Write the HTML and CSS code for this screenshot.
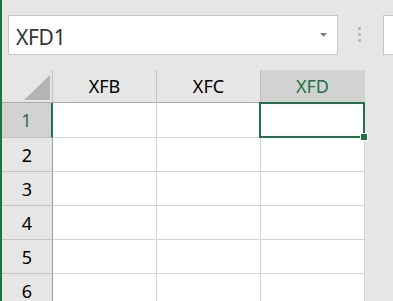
FILE: index.html
```html
<!DOCTYPE html>
<html lang="en">
<head>
<meta charset="utf-8">
<title>Sheet</title>
<link rel="stylesheet" href="styles.css">
</head>
<body>
<div class="app">
  <div class="toolbar">
    <div class="namebox">
      <span class="name">XFD1</span>
      <svg class="arrow" width="7" height="4" viewBox="0 0 7 4"><polygon points="0,0 7,0 3.5,4" fill="#808080"/></svg>
    </div>
    <div class="dots"><span></span><span></span><span></span></div>
    <div class="formula"></div>
  </div>
  <div class="sheet">
    <div class="corner"><svg width="26" height="25" viewBox="0 0 26 25"><polygon points="0,25 26,25 26,0" fill="#b4b4b4"/></svg></div>
    <div class="colhead">XFB</div>
    <div class="colhead">XFC</div>
    <div class="colhead sel">XFD</div>

    <div class="rowhead sel">1</div><div class="cell"></div><div class="cell"></div><div class="cell"></div>
    <div class="rowhead">2</div><div class="cell"></div><div class="cell"></div><div class="cell"></div>
    <div class="rowhead">3</div><div class="cell"></div><div class="cell"></div><div class="cell"></div>
    <div class="rowhead">4</div><div class="cell"></div><div class="cell"></div><div class="cell"></div>
    <div class="rowhead">5</div><div class="cell"></div><div class="cell"></div><div class="cell"></div>
    <div class="rowhead">6</div><div class="cell"></div><div class="cell"></div><div class="cell"></div>

    <div class="selection"><span class="handle"></span></div>
  </div>
</div>
</body>
</html>
```

FILE: styles.css
```css
html, body {
  margin: 0;
  padding: 0;
}
body {
  background: #e6e6e6;
  font-family: "Noto Sans", "Open Sans", sans-serif;
  overflow: hidden;
}
.app {
  height: 301px;
  border-left: 2px solid #217346;
  overflow: hidden;
}
.toolbar {
  display: flex;
  align-items: flex-start;
  height: 70px;
  box-sizing: border-box;
  padding: 15px 0 0 6px;
  overflow: hidden;
}
.toolbar > * {
  flex-shrink: 0;
}
.namebox {
  box-sizing: border-box;
  width: 330px;
  height: 40px;
  border: 1px solid #c6c6c6;
  background: #fff;
  display: flex;
  align-items: center;
  justify-content: space-between;
  padding: 3px 10px 0 7px;
}
.name {
  font-size: 21px;
  color: #333;
  letter-spacing: -0.3px;
}
.arrow {
  display: block;
  margin-top: -4px;
}
.dots {
  display: flex;
  flex-direction: column;
  gap: 3px;
  margin: 12px 0 0 20px;
}
.dots span {
  display: block;
  width: 3px;
  height: 3px;
  background: #bdbdbd;
}
.formula {
  box-sizing: border-box;
  margin-left: 22px;
  width: 20px;
  height: 40px;
  border: 1px solid #c6c6c6;
  border-right: none;
  background: #fff;
}
.sheet {
  position: relative;
  display: grid;
  grid-template-columns: 51px 104px 104px 104px;
  grid-template-rows: 33px 35px repeat(5, 34px);
  width: 363px;
}
.corner {
  border-right: 1px solid #c0c0c0;
  border-bottom: 1px solid #ababab;
  display: flex;
  align-items: flex-end;
  justify-content: flex-end;
  padding: 0 2px 2px 0;
}
.corner svg { display: block; }
.colhead {
  border-right: 1px solid #c0c0c0;
  border-bottom: 1px solid #ababab;
  display: flex;
  align-items: center;
  justify-content: center;
  font-size: 18px;
  color: #000;
}
.colhead.sel {
  background: #d2d2d2;
  color: #217346;
  border-right-color: #d2d2d2;
}
.rowhead {
  border-right: 1px solid #9e9e9e;
  border-bottom: 1px solid #c4c4c4;
  display: flex;
  align-items: center;
  justify-content: center;
  font-size: 18px;
  color: #000;
}
.rowhead.sel {
  background: #d2d2d2;
  color: #217346;
  border-right: 2px solid #217346;
}
.cell {
  background: #fff;
  border-right: 1px solid #d4d4d4;
  border-bottom: 1px solid #d4d4d4;
}
.selection {
  position: absolute;
  left: 257px;
  top: 32px;
  width: 106px;
  height: 36px;
  box-sizing: border-box;
  border: 2px solid #217346;
}
.handle {
  position: absolute;
  right: -5px;
  bottom: -5px;
  width: 6px;
  height: 6px;
  background: #217346;
  border: 1px solid #fff;
}
```
